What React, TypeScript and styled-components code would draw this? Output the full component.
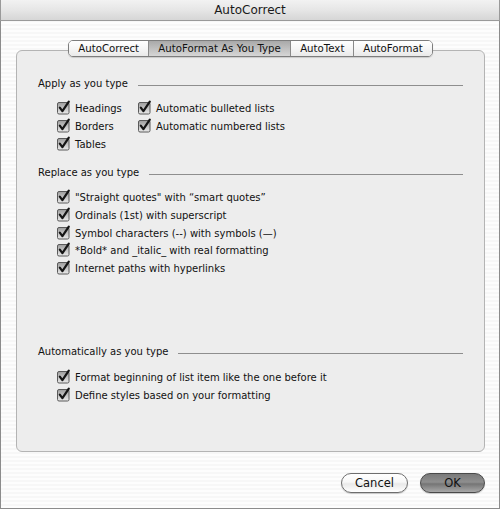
import React from "react";
import styled, { createGlobalStyle } from "styled-components";

const Global = createGlobalStyle`
  html, body { margin: 0; padding: 0; background: #ffffff; }
  body { font-family: "DejaVu Sans", "Liberation Sans", sans-serif; color: #111; }
`;

const Window = styled.div`
  width: 500px;
  height: 509px;
  box-sizing: border-box;
  border: 1px solid #8c8c8c;
  border-top: none;
  display: flex;
  flex-direction: column;
  background: repeating-linear-gradient(
    to bottom,
    #f7f7f7 0px,
    #f7f7f7 2px,
    #fdfdfd 2px,
    #fdfdfd 4px
  );
`;

const TitleBar = styled.div`
  height: 21px;
  flex: none;
  box-sizing: border-box;
  display: flex;
  align-items: center;
  justify-content: center;
  font-size: 12px;
  color: #1a1a1a;
  background: linear-gradient(to bottom, #f2f2f2 0%, #e6e6e6 50%, #d6d6d6 100%);
  border-bottom: 1px solid #9a9a9a;
  margin: 0 -1px;
  border-left: 1px solid #9a9a9a;
  border-right: 1px solid #9a9a9a;
`;

const Body = styled.div`
  flex: 1;
  display: flex;
  flex-direction: column;
  padding: 19px 14px 15px 15px;
`;

const PanelWrap = styled.div`
  position: relative;
  padding-top: 10px;
`;

const TabStrip = styled.div`
  position: absolute;
  top: 0;
  left: 0;
  right: 0;
  display: flex;
  justify-content: center;
  z-index: 1;
`;

const Tabs = styled.div`
  display: flex;
  height: 17px;
  box-sizing: border-box;
  border: 1px solid #7d7d7d;
  border-radius: 5px;
  overflow: hidden;
  box-shadow: 0 1px 1px rgba(0, 0, 0, 0.15);
`;

const Tab = styled.div<{ $active?: boolean }>`
  display: flex;
  align-items: center;
  padding: 0 ${(p) => (p.$active ? 9.4 : 8.9)}px;
  font-size: 10.2px;
  color: #111;
  white-space: nowrap;
  background: ${(p) =>
    p.$active
      ? "linear-gradient(to bottom, #a9a9a9 0%, #bdbdbd 45%, #d6d6d6 100%)"
      : "linear-gradient(to bottom, #ffffff 0%, #f6f6f6 50%, #e9e9e9 100%)"};
  & + & {
    border-left: 1px solid #8a8a8a;
  }
`;

const Panel = styled.div`
  height: 402px;
  box-sizing: border-box;
  border: 1px solid #b4b4b4;
  border-radius: 6px;
  background: #ededed;
  padding: 25px 21px 0 21px;
  display: flex;
  flex-direction: column;
`;

const Section = styled.div<{ $gap: number }>`
  display: flex;
  flex-direction: column;
  margin-bottom: ${(p) => p.$gap}px;
`;

const Header = styled.div`
  display: flex;
  align-items: center;
  height: 14px;
  font-size: 10px;
  margin-bottom: 10px;
`;

const HeaderRule = styled.div`
  flex: 1;
  height: 1px;
  background: #8e8e8e;
  margin-left: 10px;
  margin-top: 4px;
`;

const Grid = styled.div`
  display: grid;
  grid-template-columns: 81px auto;
  grid-auto-rows: 17.7px;
  padding-left: 19px;
`;

const List = styled.div`
  display: flex;
  flex-direction: column;
  padding-left: 19px;
`;

const Row = styled.label`
  display: flex;
  align-items: center;
  height: 17.7px;
  font-size: 10px;
  white-space: nowrap;
`;

const Box = styled.svg`
  width: 15px;
  height: 15px;
  flex: none;
  margin-right: 3px;
  margin-top: -2px;
`;

const Check = () => (
  <Box viewBox="0 0 15 15">
    <defs>
      <linearGradient id="cbg" x1="0" y1="0" x2="0" y2="1">
        <stop offset="0" stopColor="#9c9c9c" />
        <stop offset="0.5" stopColor="#c4c4c4" />
        <stop offset="1" stopColor="#eaeaea" />
      </linearGradient>
    </defs>
    <rect x="0.5" y="2.5" width="11.5" height="11.5" rx="1.5" fill="url(#cbg)" stroke="#5a5a5a" />
    <path d="M2.8 7.6 L5.4 11.2 L11.8 1.6" fill="none" stroke="#151515" strokeWidth="2.2" strokeLinecap="round" strokeLinejoin="round" />
  </Box>
);

const Item = ({ children }: { children: React.ReactNode }) => (
  <Row>
    <Check />
    {children}
  </Row>
);

const Footer = styled.div`
  display: flex;
  justify-content: flex-end;
  gap: 12px;
  margin-top: auto;
  padding-right: 0;
`;

const Button = styled.button<{ $primary?: boolean }>`
  height: 20px;
  width: ${(p) => (p.$primary ? 65 : 67)}px;
  border-radius: 10px;
  font-family: "DejaVu Sans", "Liberation Sans", sans-serif;
  font-size: 11.5px;
  color: #111;
  padding: 0;
  border: 1px solid ${(p) => (p.$primary ? "#4a4a4a" : "#6e6e6e")};
  background: ${(p) =>
    p.$primary
      ? "linear-gradient(to bottom, #7a7a7a 0%, #8f8f8f 45%, #757575 55%, #a8a8a8 100%)"
      : "linear-gradient(to bottom, #ffffff 0%, #f7f7f7 45%, #e9e9e9 55%, #ffffff 100%)"};
  box-shadow: 0 1px 1px rgba(0, 0, 0, 0.2);
`;

export default function App() {
  return (
    <>
      <Global />
      <Window>
        <TitleBar>AutoCorrect</TitleBar>
        <Body>
          <PanelWrap>
            <TabStrip>
              <Tabs>
                <Tab>AutoCorrect</Tab>
                <Tab $active>AutoFormat As You Type</Tab>
                <Tab>AutoText</Tab>
                <Tab>AutoFormat</Tab>
              </Tabs>
            </TabStrip>
            <Panel>
              <Section $gap={12}>
                <Header>
                  Apply as you type
                  <HeaderRule />
                </Header>
                <Grid>
                  <Item>Headings</Item>
                  <Item>Automatic bulleted lists</Item>
                  <Item>Borders</Item>
                  <Item>Automatic numbered lists</Item>
                  <Item>Tables</Item>
                </Grid>
              </Section>
              <Section $gap={67}>
                <Header>
                  Replace as you type
                  <HeaderRule />
                </Header>
                <List>
                  <Item>"Straight quotes" with “smart quotes”</Item>
                  <Item>Ordinals (1st) with superscript</Item>
                  <Item>Symbol characters (--) with symbols (—)</Item>
                  <Item>*Bold* and _italic_ with real formatting</Item>
                  <Item>Internet paths with hyperlinks</Item>
                </List>
              </Section>
              <Section $gap={0}>
                <Header>
                  Automatically as you type
                  <HeaderRule />
                </Header>
                <List>
                  <Item>Format beginning of list item like the one before it</Item>
                  <Item>Define styles based on your formatting</Item>
                </List>
              </Section>
            </Panel>
          </PanelWrap>
          <Footer>
            <Button>Cancel</Button>
            <Button $primary>OK</Button>
          </Footer>
        </Body>
      </Window>
    </>
  );
}
